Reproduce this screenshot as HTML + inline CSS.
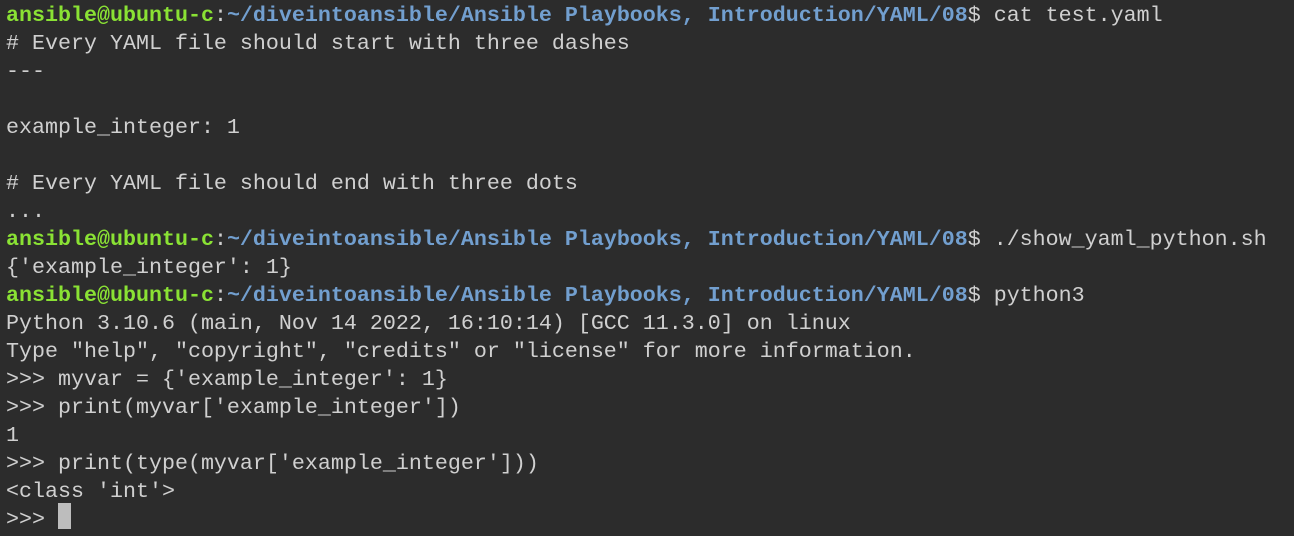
<!DOCTYPE html><html><head><style>
body{margin:0;background:#2c2c2c;width:1294px;height:536px;overflow:hidden}
pre{margin:0;padding:0 0 0 6px;font-family:"Liberation Mono",monospace;font-size:21.67px;line-height:28px;color:#d0d0d0;position:relative;top:2px}
.g{color:#8ae234;font-weight:bold}.b{color:#729fcf;font-weight:bold}
.c{display:inline-block;width:13px;height:0;position:relative}
.c::after{content:"";position:absolute;left:0;top:-22px;width:13px;height:26px;background:#bdbdbd}
</style></head><body><pre><span class="g">ansible@ubuntu-c</span>:<span class="b">~/diveintoansible/Ansible Playbooks, Introduction/YAML/08</span>$ cat test.yaml
# Every YAML file should start with three dashes
---

example_integer: 1

# Every YAML file should end with three dots
...
<span class="g">ansible@ubuntu-c</span>:<span class="b">~/diveintoansible/Ansible Playbooks, Introduction/YAML/08</span>$ ./show_yaml_python.sh
{'example_integer': 1}
<span class="g">ansible@ubuntu-c</span>:<span class="b">~/diveintoansible/Ansible Playbooks, Introduction/YAML/08</span>$ python3
Python 3.10.6 (main, Nov 14 2022, 16:10:14) [GCC 11.3.0] on linux
Type "help", "copyright", "credits" or "license" for more information.
&gt;&gt;&gt; myvar = {'example_integer': 1}
&gt;&gt;&gt; print(myvar['example_integer'])
1
&gt;&gt;&gt; print(type(myvar['example_integer']))
&lt;class 'int'&gt;
&gt;&gt;&gt; <span class="c"></span></pre></body></html>
